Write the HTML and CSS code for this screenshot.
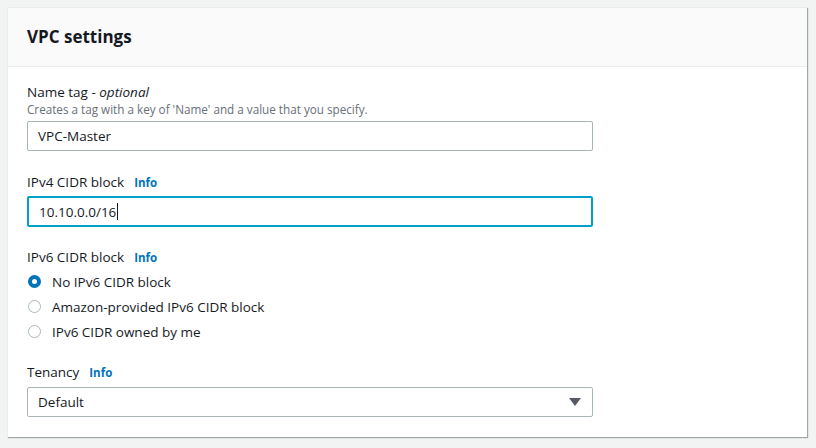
FILE: index.html
```html
<!DOCTYPE html>
<html>
<head>
<meta charset="utf-8">
<link rel="stylesheet" href="styles.css">
</head>
<body>
<div class="page">
  <section class="card">
    <header class="card-header"><h2>VPC settings</h2></header>
    <div class="card-body">
      <div class="field">
        <div class="label"><span>Name tag - <i>optional</i></span></div>
        <div class="desc">Creates a tag with a key of 'Name' and a value that you specify.</div>
        <div class="input">VPC-Master</div>
      </div>
      <div class="field f-ipv4">
        <div class="label"><span>IPv4 CIDR block</span><a class="info">Info</a></div>
        <div class="input focused">10.10.0.0/16<span class="caret"></span></div>
      </div>
      <div class="field f-ipv6">
        <div class="label"><span>IPv6 CIDR block</span><a class="info">Info</a></div>
        <div class="radios">
          <div class="radio checked"><span class="dot"></span>No IPv6 CIDR block</div>
          <div class="radio"><span class="dot"></span>Amazon-provided IPv6 CIDR block</div>
          <div class="radio"><span class="dot"></span>IPv6 CIDR owned by me</div>
        </div>
      </div>
      <div class="field f-ten">
        <div class="label"><span>Tenancy</span><a class="info">Info</a></div>
        <div class="input select">Default<span class="arrow"></span></div>
      </div>
    </div>
  </section>
</div>
</body>
</html>
```
FILE: styles.css
```css
* { box-sizing: border-box; }
html, body { margin: 0; padding: 0; }
body {
  background: #f2f3f3;
  font-family: "Open Sans", "Noto Sans", Arial, sans-serif;
  color: #16191f;
  width: 816px;
  height: 448px;
  overflow: hidden;
}
.page { padding: 7px 9px 0 7px; }
.card {
  background: #fff;
  border-top: 1px solid #eaeded;
  border-left: 1px solid #eaeded;
  box-shadow: 1px 1px 1px 0 rgba(0,28,36,0.35);
}
.card-header {
  background: #fafafa;
  border-bottom: 1px solid #eaeded;
  height: 59px;
  display: flex;
  align-items: center;
  padding: 0 19px;
}
.card-header h2 {
  margin: 0;
  font-size: 17px;
  font-weight: 700;
  line-height: 22px;
}
.card-body { padding: 15px 19px 20px; }
.label {
  font-size: 13.5px;
  line-height: 20px;
  display: flex;
  align-items: baseline;
  gap: 10px;
}
.label i { font-style: italic; }
.info {
  font-size: 11.5px;
  font-weight: 700;
  color: #0073bb;
}
.desc {
  font-size: 11.7px;
  line-height: 14px;
  color: #687078;
}
.input {
  margin-top: 5px;
  width: 566px;
  height: 30px;
  border: 1px solid #aab7b8;
  border-radius: 2px;
  padding: 0 10px;
  font-size: 13.5px;
  display: flex;
  align-items: center;
}
.f-ipv4 { margin-top: 21px; }
.f-ipv4 .input { margin-top: 3px; height: 31px; }
.input.focused {
  border: 2px solid #00a1c9;
  padding-left: 10px;
}
.caret {
  display: inline-block;
  width: 1px;
  height: 17px;
  background: #16191f;
  margin-left: 1px;
}
.f-ipv6 { margin-top: 20px; }
.radios { margin-top: 1px; }
.radio {
  height: 25px;
  display: flex;
  align-items: center;
  font-size: 13.5px;
}
.dot {
  width: 13px;
  height: 13px;
  border-radius: 50%;
  border: 1.5px solid #aab7b8;
  margin: 0 11px 0 1px;
  background: #fff;
}
.radio.checked .dot {
  border: 4px solid #0073bb;
}
.f-ten { margin-top: 18px; }
.f-ten .input { margin-top: 4px; }
.select { justify-content: space-between; }
.arrow {
  width: 0;
  height: 0;
  border-left: 6px solid transparent;
  border-right: 6px solid transparent;
  border-top: 8px solid #545b64;
  margin-right: 1px;
}
```
